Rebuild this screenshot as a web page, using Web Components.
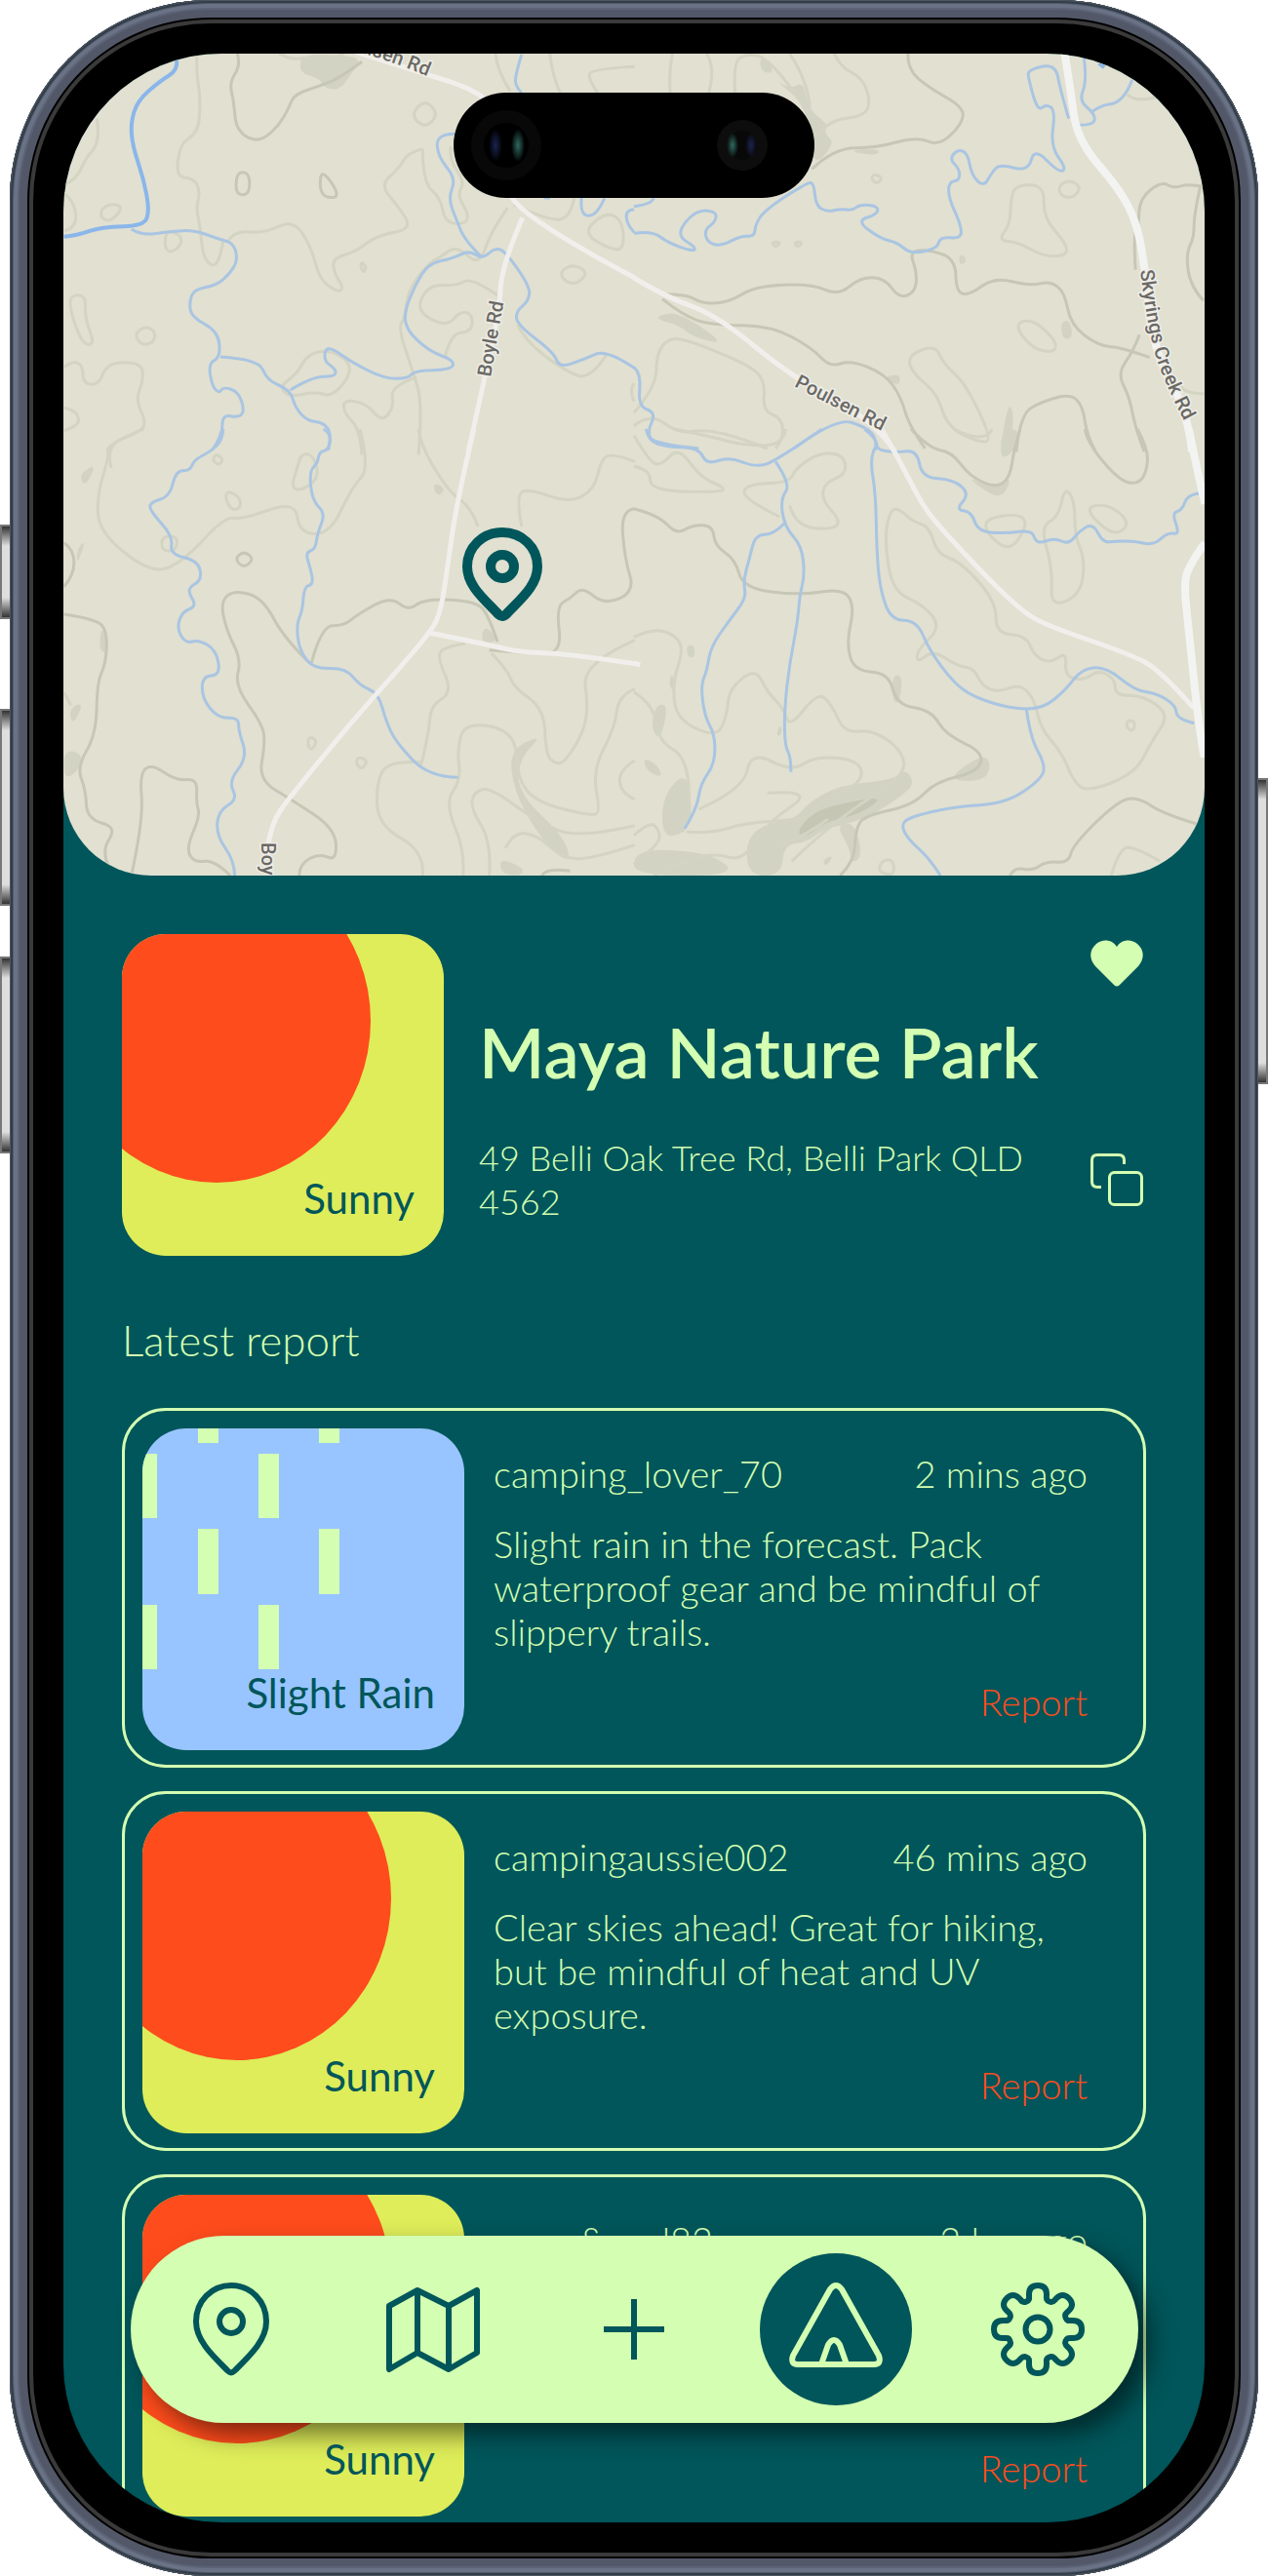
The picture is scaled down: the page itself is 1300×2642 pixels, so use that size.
<!DOCTYPE html>
<html lang="en">
<head>
<meta charset="utf-8">
<title>Maya Nature Park</title>
<style>
  :root {
    --pine: #00565a;
    --mint: #d4ffb2;
    --orange: #ff4c1c;
    --lime: #deed59;
    --sky: #98c5ff;
  }
  body { margin: 0; background: #fff; font-family: Lato, "Open Sans", sans-serif; }
</style>
</head>
<body>
<phone-frame>
  <topo-map slot="screen"></topo-map>
  <main slot="screen" style="display:contents">
    <place-summary weather="sunny" name="Maya Nature Park">49 Belli Oak Tree Rd, Belli Park QLD 4562</place-summary>
    <report-list heading="Latest report">
      <report-card weather="rain" user="camping_lover_70" time="2 mins ago">Slight rain in the forecast. Pack waterproof gear and be mindful of slippery trails.</report-card>
      <report-card weather="sunny" user="campingaussie002" time="46 mins ago">Clear skies ahead! Great for hiking, but be mindful of heat and UV exposure.</report-card>
      <report-card weather="sunny" user="camp&amp;soul82" time="2 hrs ago"></report-card>
    </report-list>
  </main>
  <tab-bar slot="overlay"></tab-bar>
</phone-frame>

<script>
const define = (name, render, after) => customElements.define(name, class extends HTMLElement {
  connectedCallback() {
    if (this.shadowRoot) return;
    this.attachShadow({ mode: 'open' }).innerHTML = render(this);
    if (after) after(this);
  }
});

/* ---------- icons ---------- */
const gearPath = (() => {
  const turn = (u, v, k) => {
    const a = k * Math.PI / 4;
    return (48 + u * Math.cos(a) + v * Math.sin(a)).toFixed(1) + ' ' + (48 + u * Math.sin(a) - v * Math.cos(a)).toFixed(1);
  };
  let d = 'M' + turn(0, 45, 0);
  for (let k = 0; k < 8; k++) {
    d += 'C' + [turn(6, 45, k), turn(9, 42, k), turn(9, 36, k)].join(' ');
    d += 'C' + [turn(9, 32, k), turn(8, 30, k), turn(12, 28.5, k)].join(' ');
    d += 'C' + [turn(-8, 30, k + 1), turn(-9, 32, k + 1), turn(-9, 36, k + 1)].join(' ');
    d += 'C' + [turn(-9, 42, k + 1), turn(-6, 45, k + 1), turn(0, 45, k + 1)].join(' ');
  }
  return d + 'Z';
})();
const pinShape = 'M39 3C19 3 3 19 3 40C3 60 21 76 36 91Q39 94 42 91C57 76 75 60 75 40C75 19 59 3 39 3Z';
const ICONS = {
  pin: [78, 96, 6, `<path d="${pinShape}"/><circle cx="39" cy="40" r="12"/>`],
  marker: [84, 96, 10, '<path d="M42 5C22 5 6 20 6 40C6 60 24 74 38 89Q42 93 46 89C60 74 78 60 78 40C78 20 62 5 42 5Z"/><circle cx="42" cy="40" r="12"/>'],
  map: [96, 88, 6, '<path d="M3 20L32 4L64 20L93 4V68L64 85L32 68L3 85ZM32 4V68M64 20V85"/>'],
  plus: [64, 64, 6, '<path d="M32 1V63M1 32H63"/>'],
  tent: [96, 96, 6, '<path d="M42 7Q48 -1 54 7L92 75Q95 84 87 84H9Q1 84 4 75ZM33 84L40 64Q46 54 52 64L59 84"/>'],
  gear: [96, 96, 6, `<path d="${gearPath}"/><circle cx="48" cy="48" r="12.5"/>`],
  heart: [54, 48, 0, '<path fill="currentColor" d="M27 7C22 -1 12 -1 6 4C-2 11 -1 20 5 27L24 46Q27 49 30 46L49 27C55 20 56 11 48 4C42 -1 32 -1 27 7Z"/>'],
  copy: [54, 54, 3, '<rect x="19.500" y="19.500" width="33" height="33" rx="5"/><path d="M11 34.500H7Q1.500 34.500 1.500 29V7Q1.500 1.500 7 1.500H29Q34.500 1.500 34.500 7V11"/>']
};
define('ui-icon', el => {
  const [w, h, s, body] = ICONS[el.getAttribute('name')];
  return `<style>:host{display:block;flex:none}svg{display:block;overflow:visible}</style>
  <svg width="${w}" height="${h}" viewBox="0 0 ${w} ${h}" fill="none" stroke="${s ? 'currentColor' : 'none'}" stroke-width="${s}" stroke-linejoin="round" stroke-linecap="butt" aria-hidden="true">${body}</svg>`;
});

/* ---------- device ---------- */
define('phone-frame', () => `
<style>
  :host { display: grid; grid-template-columns: 10px minmax(0, 1fr) 10px; height: 100vh; min-height: 1400px; }
  .rail { display: flex; flex-direction: column; }
  .left { padding-top: 538px; }
  .right { padding-top: 798px; }
  .key { box-sizing: border-box; border: 2px solid #777; border-right: 0;
         background: linear-gradient(#333, #dedede 20px, #dedede calc(100% - 20px), #333); }
  .right .key { border-right: 2px solid #777; border-left: 0; }
  .mute { height: 97px; margin-bottom: 92px; }
  .vol { height: 202px; margin-bottom: 52px; }
  .power { height: 314px; }
  .body { box-sizing: border-box; min-height: 0; padding: 55px; border-radius: 206px; background: #000;
    box-shadow: inset 0 0 0 1px #4d5763, inset 0 0 0 3px #333d48, inset 0 0 0 4px #525c6c, inset 0 0 0 8px #6a7286,
      inset 0 0 0 10px #5c6376, inset 0 0 0 18px #525868, inset 0 0 0 20px #000, inset 0 0 0 24px #3a3a3a; }
  .screen { position: relative; height: 100%; overflow: hidden; border-radius: 162px; background: var(--pine); }
  .island { position: absolute; top: 40px; left: 50%; margin-left: -185px; width: 370px; height: 108px; box-sizing: border-box;
    padding: 0 18px 0 18px; border-radius: 54px; background: #000; display: flex; align-items: center; justify-content: space-between; }
  svg { display: block; }
</style>
<div class="rail left"><span class="key mute"></span><span class="key vol"></span><span class="key vol"></span></div>
<div class="body"><div class="screen">
  <slot name="screen"></slot>
  <div class="island">
    <svg width="72" height="72" viewBox="0 0 72 72"><defs>
      <radialGradient id="t"><stop offset="0" stop-color="#2f6a60"/><stop offset="1" stop-color="#2f6a60" stop-opacity="0"/></radialGradient>
      <radialGradient id="n"><stop offset="0" stop-color="#1a2550"/><stop offset="1" stop-color="#1a2550" stop-opacity="0"/></radialGradient></defs>
      <circle cx="36" cy="36" r="36" fill="#080808"/><circle cx="36" cy="36" r="23" fill="#000"/>
      <ellipse cx="25" cy="36" rx="7" ry="17" fill="url(#n)"/><ellipse cx="48" cy="36" rx="7" ry="17" fill="url(#t)"/></svg>
    <svg width="90" height="52" viewBox="0 0 90 52"><defs>
      <radialGradient id="t"><stop offset="0" stop-color="#4a9484"/><stop offset="1" stop-color="#4a9484" stop-opacity="0"/></radialGradient>
      <radialGradient id="n"><stop offset="0" stop-color="#2a3a8c"/><stop offset="1" stop-color="#2a3a8c" stop-opacity="0"/></radialGradient></defs>
      <circle cx="34" cy="26" r="26" fill="#0d0d0d"/><circle cx="34" cy="26" r="15" fill="#080808"/>
      <ellipse cx="24" cy="26" rx="6" ry="13" fill="url(#t)"/><ellipse cx="43" cy="26" rx="6" ry="13" fill="url(#n)"/></svg>
  </div>
  <slot name="overlay"></slot>
</div></div>
<div class="rail right"><span class="key power"></span></div>`);

/* ---------- topographic map ----------
   Each sheet has an origin; its points are in sheet units (412/1000 px wide, 1/3 px high).
   kind: s shaded slope, c contour, d index contour, w creek, b river, r road, m main road */
const SHEETS = [
 [0, 0, [
  ['s','745 168 835 168 895 180 870 225 840 278 800 270 790 240 740 225 Z'],
  ['c','487 165 485 220 495 290 493 380 480 415 445 445 435 545 480 548 495 590 485 640 495 700 503 800 540 828 552 740'],
  ['d','587 165 595 200 567 255 578 310 582 380 600 415 628 432 655 425 690 385 715 330 728 290 790 265 840 240 895 190'],
  ['c','690 165 720 185 765 175 800 190 850 165'],
  ['c','240 365 248 435 210 490 190 550 158 570'],['c','158 595 185 620 190 700 160 710'],
  ['c','250 645 270 628 300 632 295 655 270 682 250 670 Z'],['d','585 540 600 527 617 540 617 590 600 602 583 590 Z'],
  ['d','795 518 843 605 805 610 790 580 Z'],['c','1050 305 1085 350 1052 395 1015 355 Z'],
  ['c','1045 458 1010 468 985 520 940 570 985 635 1020 705 930 725 880 775 820 795 830 850 850 885 835 900 790 860 770 760 725 675 655 718 580 710 565 740'],
  ['c','1045 458 1045 560 1090 610 1100 685 1150 690 1160 660 1130 600 1150 560 1110 490 1115 450'],
  ['c','410 710 445 720 450 750 425 778 407 765 Z'],['c','890 805 907 820 898 842 Z'],
  ['c','170 920 190 905 212 915 210 980 235 1060 205 1060 180 980 Z'],
  ['c','332 1030 358 1003 385 1020 380 1055 350 1062 Z'],
  ['c','158 1130 180 1110 205 1125 205 1180 245 1185 265 1115 350 1115 355 1170 335 1230 362 1300 345 1330 260 1370 275 1440'],
  ['c','158 1255 190 1262 198 1310 158 1325'],
  ['c','1440 715 1500 650 1540 680 1543 770 1505 765 Z'],['c','1385 835 1418 812 1455 840 1425 875 1395 865 Z'],
  ['c','1225 165 1230 220 1262 280'],['c','1360 165 1365 230 1385 285'],['c','1570 205 1460 212 1455 245 1478 285'],
  ['c','1255 640 1215 710 1185 820 1130 755 1090 790 1060 810 1010 890 1000 980 985 1010 1020 1140 1045 1240 1035 1400'],
  ['c','1230 908 1165 853 1130 880 1065 875 1035 930 1045 970 1105 1005 1140 955 1170 970 1165 1022 1115 1025 1100 1100'],
  ['c','1280 1000 1300 1050 1395 1140 1460 1170 1500 1090'],
  ['c','690 1190 735 1150 760 1090 820 1075 878 1130 825 1222 780 1205 715 1222 Z'],
  ['c','1030 1160 965 1190 975 1250 945 1300 905 1240 850 1230 850 1270 890 1320 895 1400'],
  ['c','1270 630 1360 680 1410 670 1420 610'],['c','1568 1180 1555 1200 1568 1235'],
  ['w','325 705 350 725 420 712 480 708 540 735 578 748 588 800 570 840 535 878 480 890 468 930 473 975 540 1020 545 1100 515 1118 525 1190 543 1210 552 1190 590 1205 605 1265 590 1285 550 1275 550 1340 525 1385'],
  ['w','545 1098 640 1105 660 1170 718 1200 730 1255 760 1295 800 1300 820 1335 812 1385'],
  ['w','718 1200 770 1160 830 1158 830 1135 800 1110 808 1060 870 1115 950 1165 1010 1165 1025 1140 1115 1138 1125 1110 1060 1080 1005 1015 1000 960 1025 880 1060 810 1120 795 1160 770 1192 798 1225 762 1250 775 1310 880 1308 925 1275 960 1280 1000 1370 1085 1383 1132 1445 1105 1500 1075 1568 1132'],
  ['w','1125 412 1080 412 1082 480 1128 550 1108 610 1130 680 1150 740 1190 790'],
  ['w','1290 168 1278 215 1272 265 1290 285'],['w','1438 605 1435 650 1455 668 1480 650 1495 610'],['w','1345 608 1360 610'],['w','1568 645 1548 645 1550 690 1568 715'],
  ['b','437 185 440 215 395 250 340 310 323 380 328 450 355 550 370 650 355 695 250 698 190 725 158 728'],
  ['r','880 160 1060 230 1170 275 1200 305'],['r','1265 605 1290 670 1570 855'],['r','1292 670 1240 820 1235 960 1195 1180 1158 1390'],
 ]],
 [650, 0, [
  ['s','310 175 335 190 345 225 315 222 Z'],['s','345 240 385 275 420 250 432 340 480 380 470 410 498 440 440 520 430 330 Z'],
  ['s','545 458 610 460 600 478 545 470 Z'],['s','60 970 110 960 230 1060 150 1040 110 1000 60 985 Z'],
  ['s','1055 990 1078 985 1085 1040 1060 1045 Z'],['s','615 1160 660 1150 655 1190 Z'],['s','925 1240 940 1270 930 1390 905 1385 Z'],
  ['c','95 165 85 230 90 285'],['c','180 165 202 210 185 285'],['c','250 285 245 190 280 165 335 180 400 290'],['c','385 165 430 250 435 330'],
  ['c','495 165 510 205 565 240 585 310 570 358 480 370 440 430'],
  ['d','677 165 677 215 730 270 815 330 812 380 755 450 700 420 600 455 495 455 440 520'],
  ['c','590 535 615 545 603 565 588 555 Z'],['c','340 745 363 745 350 762 Z'],['c','395 745 418 745 405 762 Z'],['c','808 785 820 800 808 812 Z'],
  ['c','1055 565 1080 555 1105 575 1090 605 1065 608 1050 590 Z'],
  ['c','945 568 1015 570 1012 670 1070 750 1070 788 1010 788 950 745 900 740 930 690 932 610 Z'],
  ['c','1220 290 1235 315 1290 300'],
  ['d','75 905 130 905 170 935 235 930 300 880 440 873 505 910 560 853 620 855 655 918 695 900 700 840 680 770 740 770 795 800 797 900 830 908 890 853 980 880 1030 865 1065 900 1080 1000 1150 1065 1210 1070 1275 1100'],
  ['d','70 920 120 970 190 1000 340 1003 440 1070 485 1130 535 1108 620 1150 660 1220 680 1310 720 1380'],
  ['c','0 1270 55 1190 55 1090 85 1040 130 1045 280 1120 325 1170 318 1265 365 1285 370 1350 350 1380'],
  ['c','0 1310 40 1270 110 1335 175 1320 270 1350 330 1380'],
  ['c','675 1095 745 1060 765 1120 820 1180 885 1350 860 1365 775 1315 750 1210 690 1150 Z'],
  ['c','950 990 990 985 1045 1050 1040 1085 990 1075 950 1020 Z'],
  ['d','945 1390 955 1275 1010 1235 1080 1212 1110 1250 1120 1340 1140 1385'],
  ['d','1410 575 1370 565 1335 580 1305 558 1250 610 1248 700 1235 720 1240 830'],['d','1400 575 1385 660 1385 730 1365 780 1375 880 1408 925'],
  ['d','1250 1030 1235 1080 1195 1150 1225 1220 1240 1320 1262 1390'],['c','1410 1212 1365 1210 1340 1170 1320 1185'],
  ['w','0 635 45 628 48 610'],['w','0 718 45 710 85 748 150 775 150 758 112 730 120 690 160 645 205 652 200 685 175 705 180 745 215 758 265 725 298 728 300 690 325 645 430 560 445 565 450 635 480 652 510 642 540 648 560 628 605 635 600 660 550 680 610 735 650 745 685 782 750 765 757 728 810 735 808 690 778 610 778 560 805 555 805 520 780 490 800 460 825 470 835 540 865 575 885 530 905 505 975 528 990 455 1050 530 1070 520 1030 450 1042 340 1020 320 998 342 975 240 975 215 1042 195 1055 280 1075 365'],
  ['w','1113 180 1120 250 1100 310 1140 350 1138 385 1100 385'],['w','1130 345 1160 322 1190 320 1220 285 1232 245'],['b','1150 195 1163 208'],
  ['w','0 1130 18 1150 10 1250 55 1270 32 1330 50 1365 160 1380'],['w','395 1380 500 1285 575 1315 600 1350 598 1385'],
  ['m','1065 165 1078 260 1095 430 1200 580 1245 690 1265 840 1285 1080 1370 1270 1380 1390'],
  ['r','0 855 75 912 205 970 390 1160 600 1300 645 1390'],
 ]],
 [0, 440, [
  ['s','195 140 240 105 210 180 Z'],['s','190 370 213 340 190 420 Z'],['s','170 860 208 840 180 915 Z'],['s','158 985 205 1000 195 1050 158 1080 Z'],
  ['s','250 610 268 640 262 690 245 680 Z'],['s','1072 165 1100 180 1090 205 1075 195 Z'],['s','1195 610 1215 620 1230 655 1190 660 Z'],['s','1260 985 1345 940 1285 1010 1280 1120 1400 1260 1410 1345 1330 1250 1270 1110 Z'],
  ['s','1235 1320 1295 1350 1290 1374 1240 1370 Z'],
  ['c','355 0 262 48 270 85 240 200 245 320 380 450 460 400 555 270 600 278 730 220 740 320 815 325 870 180 915 120 890 0'],
  ['c','745 75 775 80 790 150 745 190 720 180 735 120 Z'],['c','535 75 553 95 540 112 525 95 Z'],['c','560 190 590 205 597 240 575 252 558 220 Z'],['c','400 330 440 330 435 375 400 375 Z'],
  ['d','580 400 603 375 628 400 603 428 Z'],['d','158 350 183 370 183 450 158 485'],['d','158 570 240 585 265 625 262 720 240 780 238 940 190 1040 212 1110 215 1200 290 1225 250 1300 270 1350'],
  ['c','158 810 175 850'],['c','765 945 785 960 770 990 760 970 Z'],['c','885 1008 910 1020 895 1048 880 1030 Z'],
  ['d','765 720 700 640 650 520 580 495 545 530 560 620 597 710 580 790 650 910 655 970 640 1080 720 1140 830 1230 832 1330 790 1305 740 1340 740 1374'],
  ['d','325 1374 355 1200 345 1060 375 1030 435 1082 488 1075 485 1150 495 1190 460 1290 480 1335 530 1325 570 1374'],
  ['d','770 720 795 605 850 605 885 570 965 515 1010 560 1050 522 1180 530 1210 580 1230 655'],
  ['c','1035 0 1040 50 1110 195 1165 240 1182 300'],
  ['c','1290 300 1275 200 1310 185 1410 228 1470 185 1485 100 1510 72 1570 100'],
  ['d','1570 245 1535 248 1545 400 1570 500 1495 542 1440 485 1412 520 1375 545 1390 690 1310 690 1210 680'],
  ['c','1150 660 1100 670 1080 700 1120 810 1065 850 1060 940 1040 1040'],
  ['c','1215 690 1255 740 1270 795 1345 860 1350 1000 1370 1028 1395 1028 1440 940 1455 860 1440 720 1570 650'],
  ['c','1570 800 1530 820 1520 920 1465 1050 1485 1180 1460 1190 1330 1150 1280 1080 1275 930 1150 900 1130 990 1140 1080 1100 1150 1150 1300 1145 1374'],
  ['c','1040 1025 960 1020 930 1090 935 1220 1050 1300 1045 1374'],
  ['c','1210 1374 1215 1270 1165 1170 1170 1120 1210 1100 1330 1210 1430 1260 1570 1220'],['c','1570 1020 1530 1050 1535 1120 1570 1140'],
  ['c','1250 1290 1270 1240 1330 1250 1390 1320 1460 1325 1570 1280'],['d','1340 1374 1350 1350 1410 1360'],
  ['w','552 0 550 35 520 70 480 95 470 128 435 128 420 208 372 225 370 250 428 330 420 385 490 405 500 465 460 492 488 545 450 562 437 615 460 660 490 648 535 680 545 758 500 760 500 830 540 890 590 888 590 930 612 1010 565 1085 588 1140 540 1175 535 1250 580 1330 580 1374'],
  ['w','800 0 820 15 812 65 790 70 785 105 765 130 772 220 805 260 785 320 780 370 755 380 768 430 775 478 752 485 748 560 733 600 740 680 775 738 855 735 890 790 935 812 955 900 980 965 1060 1070 1133 1072'],
  ['r','1172 0 1130 220 1105 440 1090 560 1065 628 870 900 715 1135 670 1215 662 1290'],['r','1065 628 1200 662 1290 688 1400 690 1570 722'],
 ]],
 [650, 440, [
  ['s','910 0 955 0 940 70 905 95 Z'],['s','820 145 885 180 935 145 915 205 885 205 Z'],['s','130 665 150 665 150 705 132 700 Z'],['s','95 745 102 810 85 790 Z'],
  ['s','55 845 85 850 65 960 42 920 Z'],['s','22 1010 60 1035 70 1075 30 1050 Z'],['s','130 1050 145 1180 130 1240 70 1260 70 1130 Z'],['s','0 1310 60 1290 200 1310 255 1374 0 1374 Z'],
  ['s','640 755 665 760 655 850 638 830 Z'],['s','860 1000 885 1030 865 1085 770 1080 Z'],['s','350 940 365 905 365 945 Z'],['s','465 1325 495 1310 475 1348 Z'],
  ['s','285 1374 275 1280 310 1220 400 1200 430 1150 510 1095 640 1080 670 1045 695 1090 660 1130 600 1180 530 1215 470 1230 430 1270 370 1280 365 1374 Z'],
  ['x','400 1245 440 1180 520 1150 620 1130 560 1185 470 1210 430 1255 Z'],['s','500 1220 545 1210 565 1310 540 1340 530 1280 Z'],
  ['c','0 20 40 105 70 110 110 55 165 150 225 180 215 195 40 190 40 125 0 115'],['c','100 0 180 20 270 50 370 50 375 0'],
  ['c','360 270 270 215 275 170 385 165 400 120 460 72 520 80 525 140 470 165 465 220 510 280 495 310 400 300 385 235'],
  ['d','0 245 60 265 105 325 145 295 195 298 200 360 250 400 270 490 410 512 520 490 545 550 525 660 545 745 630 750 650 850 735 865 770 940 865 995 850 1055 745 1085 690 1158 570 1190 548 1230 545 1330 510 1374'],
  ['d','685 0 730 60 785 70 830 145 895 182 930 150 940 60 955 0'],['d','1115 0 1120 40 1200 160 1250 170 1270 120 1270 60 1245 0'],['c','790 0 870 48 885 0'],
  ['c','650 240 690 285 730 300 750 385 810 410 895 530 895 630 970 635 990 700 1030 720 1070 685 1065 760 1110 775 1150 740 1190 770 1190 820 1260 820 1325 880 1280 960 1240 1060 1120 1118 1085 1080 1060 1000 1005 920 990 830 955 785 900 810 860 790 840 735 800 730 740 680 700 720 700 680 760 610 715 540 640 500 620 350 630 260 Z'],
  ['c','870 275 950 260 975 290 930 380 870 320 Z'],['c','1065 178 1090 220 1090 330 1115 400 1105 510 1030 550 1035 430 1005 300 1050 270 Z'],['c','1125 235 1180 235 1228 290 1190 330 1130 270 Z'],['c','1220 895 1240 900 1235 930 1218 920 Z'],
  ['c','0 640 50 610 110 640 120 690 95 780 105 895 205 950 230 880 235 800 300 735 330 810 370 860 385 920 455 808 490 850 520 935 590 925 665 990 670 1070 500 1200 390 1330'],
  ['c','0 810 50 850 60 960 130 1010 140 1180 120 1240'],['c','160 1170 270 1110 290 990 390 1055 450 1005 560 1020 565 1090 450 1150 440 1200 280 1210 190 1245 130 1240'],
  ['c','0 1250 40 1205 65 1240 60 1280 0 1340'],['c','50 1374 120 1330 200 1305 270 1330 330 1210 450 1110 330 1120'],['c','320 1374 330 1290 420 1255 480 1200'],['c','610 1330 640 1322 645 1374 605 1365 Z'],
  ['d','930 1374 940 1348 985 1360 1020 1330 1075 1335 1085 1280 1200 1140 1250 1135 1310 1185 1405 1220'],['c','1180 1374 1200 1290 1240 1285 1300 1330'],
  ['w','30 0 35 35 80 55 160 58 180 110 235 85 300 118 350 100 465 0'],['w','350 100 388 170 362 215 372 300 415 360 422 450 410 510 405 590 385 720 372 860 373 975 388 1010 388 1055'],
  ['w','372 290 345 325 300 325 285 400 270 470 278 520 235 590 190 670 180 745 165 790 175 885 200 940 200 1030 165 1090 155 1170 125 1230'],
  ['w','570 0 600 30 600 65 650 72 700 65 712 150 790 155 830 200 795 248 835 255 850 315 920 322 985 310 995 355 1040 335 1075 355 1100 315 1135 290 1160 350 1190 345 1240 345 1285 358 1320 318 1350 325 1330 258 1355 250 1370 200 1400 198'],
  ['w','600 50 582 80 598 200 600 370 608 490 635 588 700 590 730 680 790 780 840 825 930 860 1010 862 1070 800 1105 740 1165 730 1240 805 1290 812 1340 850 1342 892 1385 905'],
  ['w','970 860 980 950 1018 1035 1005 1080 920 1152 790 1162 680 1195 660 1220 680 1265 730 1320 758 1374'],
  ['m','1372 0 1395 140 1412 230'],['m','1412 350 1372 420 1360 480 1372 620 1395 900 1410 1010'],['r','612 0 650 80 715 240 770 320 860 440 950 550 1010 600 1220 690 1300 740 1385 860'],['r','0 720 15 726'],
 ]],
];
const KINDS = {
  s: 'fill="#d2d3c3"', x: 'fill="#c6c6b4"',
  c: 'fill="none" stroke="#d4d4c3" stroke-width="3"', d: 'fill="none" stroke="#c7c7b6" stroke-width="3"',
  w: 'fill="none" stroke="#aac5e2" stroke-width="3"', b: 'fill="none" stroke="#8ab6ea" stroke-width="4"',
  r: 'fill="none" stroke="#f0efec" stroke-width="5"', m: 'fill="none" stroke="#f3f3f2" stroke-width="8"'
};
const curve = (ox, oy, src) => {
  const closed = src.endsWith('Z');
  const n = src.replace('Z', '').trim().split(/\s+/).map(Number);
  const p = [];
  for (let i = 0; i < n.length; i += 2) p.push([ox + n[i] / 2.412, oy + n[i + 1] / 3]);
  const f = a => a[0].toFixed(1) + ' ' + a[1].toFixed(1);
  const mid = (a, b) => [(a[0] + b[0]) / 2, (a[1] + b[1]) / 2];
  if (closed) {
    let d = 'M' + f(mid(p[p.length - 1], p[0]));
    p.forEach((q, i) => { d += 'Q' + f(q) + ' ' + f(mid(q, p[(i + 1) % p.length])); });
    return d + 'Z';
  }
  if (p.length < 3) return 'M' + p.map(f).join('L');
  let d = 'M' + f(p[0]);
  for (let i = 1; i < p.length - 1; i++) d += 'Q' + f(p[i]) + ' ' + f(i === p.length - 2 ? p[i + 1] : mid(p[i], p[i + 1]));
  return d;
};
define('topo-map', () => {
  let art = '';
  for (const k of ['s', 'x', 'c', 'd', 'w', 'b', 'r', 'm'])
    for (const [ox, oy, list] of SHEETS)
      for (const [kind, pts] of list) if (kind === k) art += `<path ${KINDS[k]} d="${curve(ox, oy, pts)}"/>`;
  return `<style>
    :host { display: grid; aspect-ratio: 1170 / 843; overflow: hidden; border-radius: 0 0 90px 90px; background: #e1e0d1; }
    svg, ui-icon { grid-area: 1 / 1; }
    svg { width: 100%; height: 100%; display: block; min-height: 0; }
    text { font: 500 20px Roboto, sans-serif; fill: #6b6965; stroke: #efeee8; stroke-width: 3px; paint-order: stroke; }
    ui-icon { position: absolute; left: calc(50% - 177px); top: 486px; color: var(--pine); }
  </style>
  <svg viewBox="65 55 1170 843" preserveAspectRatio="xMidYMid slice" role="img" aria-label="Map">
    <defs>
      <path id="p1" d="M342 47Q400 60 460 88"/><path id="p2" d="M503 387L518 300"/>
      <path id="p3" d="M814 396Q860 420 920 450"/><path id="p4" d="M1169 277Q1174 320 1181 350Q1188 385 1224 450"/><path id="p5" d="M268 864V960"/>
    </defs>
    <g stroke-linejoin="round">${art}</g>
    <text><textPath href="#p1">Poulsen Rd</textPath></text><text><textPath href="#p2">Boyle Rd</textPath></text>
    <text><textPath href="#p3">Poulsen Rd</textPath></text><text><textPath href="#p4">Skyrings Creek Rd</textPath></text>
    <text><textPath href="#p5">Boyle Rd</textPath></text>
  </svg>
  <ui-icon name="marker"></ui-icon>`;
});

/* ---------- weather tile ---------- */
const SKIES = {
  sunny: ['Sunny', 'var(--lime)', '<ellipse cx="97" cy="89" rx="158" ry="166" fill="var(--orange)"/>'],
  rain: ['Slight Rain', 'var(--sky)', '<path fill="var(--mint)" d="M-6 26h21v66h-21zM-6 181h21v66h-21zM57 -51h21v66h-21zM57 103h21v67h-21zM119 26h21v66h-21zM119 181h21v66h-21zM181 -51h21v66h-21zM181 103h21v67h-21z"/>']
};
define('weather-tile', el => {
  const [label, color, art] = SKIES[el.getAttribute('sky')];
  return `<style>
    :host { display: grid; flex: none; width: 330px; height: 330px; overflow: hidden; border-radius: 45px; background: ${color}; }
    svg, span { grid-area: 1 / 1; }
    span { place-self: end; margin: 32px 30px; z-index: 1; font-size: 42px; line-height: 53px; font-weight: 400; color: var(--pine); }
  </style><svg width="330" height="330" viewBox="0 0 330 330" aria-hidden="true">${art}</svg><span>${label}</span>`;
});

/* ---------- place header ---------- */
define('place-summary', el => `
<style>
  :host { display: flex; gap: 36px; padding: 60px 60px 0; color: var(--mint); }
  .info { flex: 1; min-width: 0; display: flex; flex-direction: column; }
  .row { display: flex; justify-content: space-between; align-items: center; }
  .top { justify-content: flex-end; height: 60px; }
  h1 { margin: 15px 0 42px; font-size: 72px; line-height: 90px; font-weight: 600; white-space: nowrap; }
  p { margin: 0; max-width: 590px; font-size: 36px; line-height: 45px; font-weight: 300; }
  button { all: unset; display: grid; place-items: center; width: 60px; height: 60px; cursor: pointer; }
</style>
<weather-tile sky="${el.getAttribute('weather')}"></weather-tile>
<div class="info">
  <div class="row top"><button aria-label="Save place"><ui-icon name="heart"></ui-icon></button></div>
  <h1>${el.getAttribute('name')}</h1>
  <div class="row"><p><slot></slot></p><button aria-label="Copy address"><ui-icon name="copy"></ui-icon></button></div>
</div>`);

/* ---------- reports ---------- */
define('report-list', el => `
<style>
  :host { display: flex; flex-direction: column; gap: 24px; padding: 60px 60px 0; color: var(--mint); }
  h2 { margin: 0 0 19px; font-size: 44px; line-height: 53px; font-weight: 300; }
</style><h2>${el.getAttribute('heading')}</h2><slot></slot>`);

define('report-card', el => `
<style>
  :host { display: flex; gap: 30px; padding: 18px 57px 15px 18px; border: 3px solid var(--mint); border-radius: 45px;
    font-size: 38px; line-height: 45px; font-weight: 300; }
  .info { flex: 1; min-width: 0; display: flex; flex-direction: column; padding: 24px 0 27px; }
  .meta { display: flex; justify-content: space-between; margin-bottom: 27px; }
  p { margin: 0; max-width: 590px; }
  button { all: unset; margin-top: auto; align-self: flex-end; color: var(--orange); cursor: pointer; }
</style>
<weather-tile sky="${el.getAttribute('weather')}"></weather-tile>
<div class="info">
  <div class="meta"><span class="user"></span><time>${el.getAttribute('time')}</time></div>
  <p><slot></slot></p>
  <button>Report</button>
</div>`, el => { el.shadowRoot.querySelector('.user').textContent = el.getAttribute('user'); });

/* ---------- navigation ---------- */
define('tab-bar', () => `
<style>
  :host { position: absolute; left: 69px; right: 68px; bottom: 102px; }
  nav { display: flex; align-items: center; height: 192px; border-radius: 96px; background: var(--mint); box-shadow: 12px 12px 24px rgba(0, 0, 0, .5); }
  a { flex: 1; display: grid; place-items: center; color: var(--pine); }
  .on ui-icon { box-sizing: border-box; padding: 30px; border-radius: 50%; background: var(--pine); color: var(--mint); }
</style>
<nav aria-label="Main">
  <a href="#near" aria-label="Nearby"><ui-icon name="pin"></ui-icon></a>
  <a href="#map" aria-label="Map"><ui-icon name="map"></ui-icon></a>
  <a href="#add" aria-label="Add report"><ui-icon name="plus"></ui-icon></a>
  <a href="#camps" aria-label="Campsites" aria-current="page" class="on"><ui-icon name="tent"></ui-icon></a>
  <a href="#settings" aria-label="Settings"><ui-icon name="gear"></ui-icon></a>
</nav>`);
</script>
</body>
</html>
